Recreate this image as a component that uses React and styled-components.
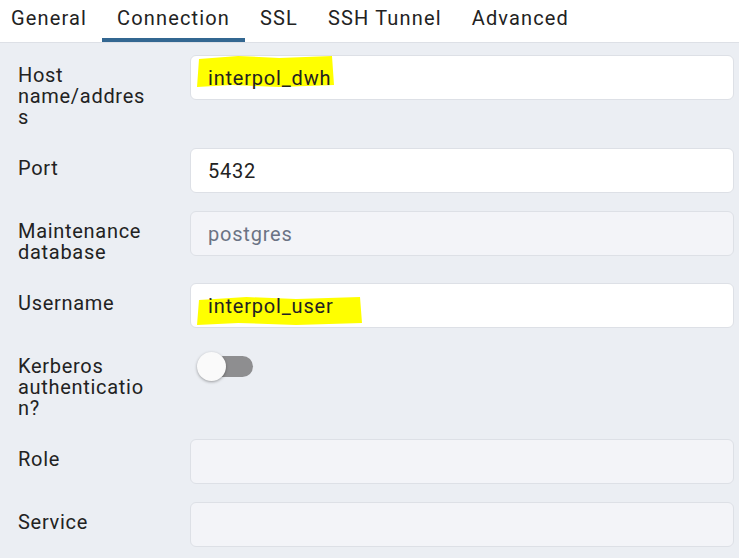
import React from 'react';
import styled, { createGlobalStyle } from 'styled-components';

const GlobalStyle = createGlobalStyle`
  html, body {
    margin: 0;
    padding: 0;
    background: #ebeef3;
  }
  body {
    font-family: Roboto, "Liberation Sans", sans-serif;
    color: #222;
    letter-spacing: 0.8px;
  }
`;

const Page = styled.div`
  width: 739px;
  height: 558px;
  overflow: hidden;
  background: #ebeef3;
`;

const TabBar = styled.div`
  display: flex;
  height: 42px;
  background: #fff;
  border-bottom: 1px solid #dde0e6;
  margin-left: -4px;
`;

const Tab = styled.div`
  display: flex;
  align-items: center;
  padding: 0 15px 2px;
  font-size: 20px;
  letter-spacing: 1.15px;
  color: #222;
  border-bottom: 4px solid ${p => (p.active ? '#336791' : 'transparent')};
  box-sizing: border-box;
  height: 42px;
  white-space: nowrap;
`;

const Form = styled.div`
  display: flex;
  flex-direction: column;
  gap: 18px;
  padding: 12px 5px 0 18px;
`;

const Row = styled.div`
  display: flex;
  align-items: flex-start;
`;

const Label = styled.div`
  width: 132px;
  margin-right: 40px;
  padding: 10px 0 2px;
  font-size: 20px;
  line-height: 21px;
  letter-spacing: 0.7px;
  overflow-wrap: anywhere;
  color: #222;
`;

const Input = styled.div`
  position: relative;
  flex: 1;
  height: 45px;
  box-sizing: border-box;
  border: 1px solid #dde0e6;
  border-radius: 6px;
  background: ${p => (p.disabled ? '#f3f4f8' : '#fff')};
  color: ${p => (p.disabled ? '#6b7384' : '#222')};
  font-size: 20px;
  display: flex;
  align-items: center;
  padding: 0 17px;
`;

const Marker = styled.svg`
  position: absolute;
  left: 6px;
  top: 0;
  pointer-events: none;
`;

const Text = styled.span`
  position: relative;
`;

const Switch = styled.div`
  position: relative;
  width: 56px;
  height: 29px;
  margin: 6px 0 0 7px;
`;

const Track = styled.div`
  position: absolute;
  left: 21px;
  top: 4px;
  width: 35px;
  height: 21px;
  border-radius: 0 11px 11px 0;
  background: #8e8e90;
`;

const Thumb = styled.div`
  position: absolute;
  left: 0;
  top: 0;
  width: 29px;
  height: 29px;
  border-radius: 50%;
  background: #fafafa;
  box-shadow: 0 1px 3px rgba(0, 0, 0, 0.35);
`;

const tabs = ['General', 'Connection', 'SSL', 'SSH Tunnel', 'Advanced'];

const Highlight = ({ width, height, top }) => (
  <Marker width={width} height={height + top + 4}>
    <path
      d={`M2 ${top + 3} L${width * 0.3} ${top} L${width * 0.6} ${top + 2} L${width - 2} ${top} L${width} ${top + height - 2} L${width * 0.6} ${top + height} L${width * 0.25} ${top + height - 2} L0 ${top + height} Z`}
      fill="#ffff00"
    />
  </Marker>
);

export default function App() {
  return (
    <Page>
      <GlobalStyle />
      <TabBar>
        {tabs.map(t => (
          <Tab key={t} active={t === 'Connection'}>{t}</Tab>
        ))}
      </TabBar>
      <Form>
        <Row>
          <Label>Host name/address</Label>
          <Input>
            <Highlight width={137} height={31} top={0} />
            <Text>interpol_dwh</Text>
          </Input>
        </Row>
        <Row>
          <Label>Port</Label>
          <Input>5432</Input>
        </Row>
        <Row>
          <Label>Maintenance database</Label>
          <Input disabled>postgres</Input>
        </Row>
        <Row>
          <Label>Username</Label>
          <Input>
            <Highlight width={165} height={28} top={13} />
            <Text>interpol_user</Text>
          </Input>
        </Row>
        <Row>
          <Label>Kerberos authentication?</Label>
          <Switch>
            <Track />
            <Thumb />
          </Switch>
        </Row>
        <Row>
          <Label>Role</Label>
          <Input disabled />
        </Row>
        <Row>
          <Label>Service</Label>
          <Input disabled />
        </Row>
      </Form>
    </Page>
  );
}
